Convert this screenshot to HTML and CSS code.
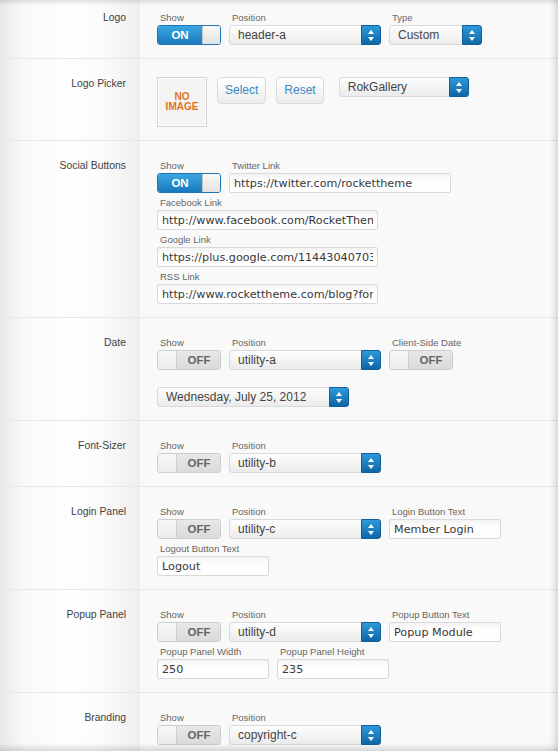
FILE: index.html
```html
<!DOCTYPE html>
<html lang="en">
<head>
<meta charset="utf-8">
<title>Gantry settings</title>
<link rel="stylesheet" href="styles.css">
</head>
<body>
<div class="panel">

  <div class="row first">
    <div class="label">Logo</div>
    <div class="fields">
      <div class="line">
        <div class="field"><div class="cap">Show</div>
          <div class="toggle on"><span class="tx">ON</span><span class="knob"></span></div></div>
        <div class="field"><div class="cap">Position</div>
          <div class="select w-pos"><span class="val">header-a</span><span class="arrow"><svg width="6" height="11" viewBox="0 0 6 11"><path d="M3 0 L6 4 H0Z M0 7 H6 L3 11Z" fill="#fff"/></svg></span></div></div>
        <div class="field"><div class="cap">Type</div>
          <div class="select w-type"><span class="val">Custom</span><span class="arrow"><svg width="6" height="11" viewBox="0 0 6 11"><path d="M3 0 L6 4 H0Z M0 7 H6 L3 11Z" fill="#fff"/></svg></span></div></div>
      </div>
    </div>
  </div>

  <div class="row">
    <div class="label">Logo Picker</div>
    <div class="fields">
      <div class="line picker">
        <div class="noimage"><span>NO</span><span>IMAGE</span></div>
        <div class="btn">Select</div>
        <div class="btn">Reset</div>
        <div class="select w-gal"><span class="val">RokGallery</span><span class="arrow"><svg width="6" height="11" viewBox="0 0 6 11"><path d="M3 0 L6 4 H0Z M0 7 H6 L3 11Z" fill="#fff"/></svg></span></div>
      </div>
    </div>
  </div>

  <div class="row">
    <div class="label">Social Buttons</div>
    <div class="fields">
      <div class="line">
        <div class="field"><div class="cap">Show</div>
          <div class="toggle on"><span class="tx">ON</span><span class="knob"></span></div></div>
        <div class="field"><div class="cap">Twitter Link</div>
          <input class="input w-tw" type="text" value="https://twitter.com/rockettheme" readonly></div>
      </div>
      <div class="line">
        <div class="field"><div class="cap">Facebook Link</div>
          <input class="input w-long" type="text" value="http://www.facebook.com/RocketTheme" readonly></div>
      </div>
      <div class="line">
        <div class="field"><div class="cap">Google Link</div>
          <input class="input w-long" type="text" value="https://plus.google.com/114430407034567" readonly></div>
      </div>
      <div class="line">
        <div class="field"><div class="cap">RSS Link</div>
          <input class="input w-long" type="text" value="http://www.rockettheme.com/blog?format=feed" readonly></div>
      </div>
    </div>
  </div>

  <div class="row">
    <div class="label">Date</div>
    <div class="fields">
      <div class="line">
        <div class="field"><div class="cap">Show</div>
          <div class="toggle off"><span class="knob"></span><span class="tx">OFF</span></div></div>
        <div class="field"><div class="cap">Position</div>
          <div class="select w-pos"><span class="val">utility-a</span><span class="arrow"><svg width="6" height="11" viewBox="0 0 6 11"><path d="M3 0 L6 4 H0Z M0 7 H6 L3 11Z" fill="#fff"/></svg></span></div></div>
        <div class="field"><div class="cap">Client-Side Date</div>
          <div class="toggle off"><span class="knob"></span><span class="tx">OFF</span></div></div>
      </div>
      <div class="line spaced">
        <div class="select w-date"><span class="val">Wednesday, July 25, 2012</span><span class="arrow"><svg width="6" height="11" viewBox="0 0 6 11"><path d="M3 0 L6 4 H0Z M0 7 H6 L3 11Z" fill="#fff"/></svg></span></div>
      </div>
    </div>
  </div>

  <div class="row">
    <div class="label">Font-Sizer</div>
    <div class="fields">
      <div class="line">
        <div class="field"><div class="cap">Show</div>
          <div class="toggle off"><span class="knob"></span><span class="tx">OFF</span></div></div>
        <div class="field"><div class="cap">Position</div>
          <div class="select w-pos"><span class="val">utility-b</span><span class="arrow"><svg width="6" height="11" viewBox="0 0 6 11"><path d="M3 0 L6 4 H0Z M0 7 H6 L3 11Z" fill="#fff"/></svg></span></div></div>
      </div>
    </div>
  </div>

  <div class="row">
    <div class="label">Login Panel</div>
    <div class="fields">
      <div class="line">
        <div class="field"><div class="cap">Show</div>
          <div class="toggle off"><span class="knob"></span><span class="tx">OFF</span></div></div>
        <div class="field"><div class="cap">Position</div>
          <div class="select w-pos"><span class="val">utility-c</span><span class="arrow"><svg width="6" height="11" viewBox="0 0 6 11"><path d="M3 0 L6 4 H0Z M0 7 H6 L3 11Z" fill="#fff"/></svg></span></div></div>
        <div class="field"><div class="cap">Login Button Text</div>
          <input class="input w-short" type="text" value="Member Login" readonly></div>
      </div>
      <div class="line">
        <div class="field"><div class="cap">Logout Button Text</div>
          <input class="input w-short" type="text" value="Logout" readonly></div>
      </div>
    </div>
  </div>

  <div class="row">
    <div class="label">Popup Panel</div>
    <div class="fields">
      <div class="line">
        <div class="field"><div class="cap">Show</div>
          <div class="toggle off"><span class="knob"></span><span class="tx">OFF</span></div></div>
        <div class="field"><div class="cap">Position</div>
          <div class="select w-pos"><span class="val">utility-d</span><span class="arrow"><svg width="6" height="11" viewBox="0 0 6 11"><path d="M3 0 L6 4 H0Z M0 7 H6 L3 11Z" fill="#fff"/></svg></span></div></div>
        <div class="field"><div class="cap">Popup Button Text</div>
          <input class="input w-short" type="text" value="Popup Module" readonly></div>
      </div>
      <div class="line">
        <div class="field"><div class="cap">Popup Panel Width</div>
          <input class="input w-short" type="text" value="250" readonly></div>
        <div class="field"><div class="cap">Popup Panel Height</div>
          <input class="input w-short" type="text" value="235" readonly></div>
      </div>
    </div>
  </div>

  <div class="row">
    <div class="label">Branding</div>
    <div class="fields">
      <div class="line">
        <div class="field"><div class="cap">Show</div>
          <div class="toggle off"><span class="knob"></span><span class="tx">OFF</span></div></div>
        <div class="field"><div class="cap">Position</div>
          <div class="select w-pos"><span class="val">copyright-c</span><span class="arrow"><svg width="6" height="11" viewBox="0 0 6 11"><path d="M3 0 L6 4 H0Z M0 7 H6 L3 11Z" fill="#fff"/></svg></span></div></div>
      </div>
    </div>
  </div>

</div>
</body>
</html>
```
FILE: styles.css
```css
* { box-sizing: border-box; }
html, body { margin: 0; padding: 0; }
body {
  font-family: "Liberation Sans", Arial, sans-serif;
  background: #f9f9f9;
  overflow: hidden;
}
.panel {
  position: relative;
  height: 751px;
  overflow: hidden;
}
.panel::after {
  content: "";
  position: absolute;
  inset: 0;
  pointer-events: none;
  box-shadow:
    inset 0 6px 5px -4px rgba(0,0,0,.13),
    inset -7px 0 5px -3px rgba(0,0,0,.12),
    inset 0 -8px 5px -4px rgba(0,0,0,.13);
}
.row {
  display: grid;
  grid-template-columns: 140px 1fr;
  border-bottom: 1px solid #e7e7e7;
  background: linear-gradient(to right, #e9e9e9 0, #f9f9f9 25px, #fefefe 70px, #fbfbfb 100px, #efefef 140px, #f9f9f9 140px);
}
.label {
  padding: 18px 14px 0 0;
  text-align: right;
  font-size: 10.4px;
  line-height: 13px;
  color: #3f3f3f;
}
.fields {
  padding: 18px 0 13px 17px;
  display: flex;
  flex-direction: column;
  gap: 3px;
}
.row.first .label,
.row.first .fields { padding-top: 11px; }
.line {
  display: flex;
  gap: 8px;
  align-items: flex-end;
}
.line.spaced { margin-top: 14px; }
.field { display: flex; flex-direction: column; }
.cap {
  font-size: 9.5px;
  line-height: 13px;
  margin: 0 0 1px 3px;
  color: #666;
  white-space: nowrap;
}

/* toggles */
.toggle {
  width: 64px;
  height: 20px;
  border-radius: 3px;
  display: flex;
  overflow: hidden;
  border: 1px solid #cdcdcd;
}
.toggle .tx {
  font-weight: bold;
  font-size: 11.5px;
  line-height: 18px;
  text-align: center;
}
.toggle.on { border-color: #1d77b6; }
.toggle.on .tx {
  flex: 0 0 44px;
  background: linear-gradient(#3aa6e1, #1a78bd);
  color: #fff;
}
.toggle.on .knob {
  flex: 1;
  background: linear-gradient(#f8f8f8, #e3e3e3);
  border-left: 1px solid #c4c4c4;
}
.toggle.off .knob {
  flex: 0 0 19px;
  background: linear-gradient(#f7f7f7, #ececec);
  border-right: 1px solid #cfcfcf;
}
.toggle.off .tx {
  flex: 1;
  background: linear-gradient(#e8e8e8, #dadada);
  color: #666;
  padding-left: 1px;
}

/* selects */
.select {
  height: 20px;
  display: flex;
  border: 1px solid #d9d9d9;
  border-radius: 3px;
  background: linear-gradient(#fefefe, #ebebeb);
}
.select .val {
  flex: 1;
  padding-left: 8px;
  font-size: 12px;
  line-height: 18px;
  color: #444;
  white-space: nowrap;
  overflow: hidden;
}
.select .arrow {
  flex: 0 0 20px;
  margin: -1px -1px -1px 0;
  border-radius: 0 3px 3px 0;
  background: linear-gradient(#2e9ad9, #0f66a6);
  border: 1px solid #0f5f9c;
  display: flex;
  align-items: center;
  justify-content: center;
}
.select .arrow svg { display: block; }
.w-pos { width: 152px; }
.w-type { width: 93px; }
.w-gal { width: 130px; }
.w-date { width: 192px; }

/* inputs */
.input {
  display: block;
  height: 20px;
  margin: 0;
  padding: 0 4px;
  border: 1px solid #d9d9d9;
  border-radius: 2px;
  background: linear-gradient(#f3f3f3, #fdfdfd 6px, #fff);
  font-family: "DejaVu Sans", Verdana, sans-serif;
  font-size: 11.2px;
  color: #383838;
  outline: none;
}
.w-tw { width: 222px; }
.w-long { width: 221px; }
.w-short { width: 112px; }

/* logo picker */
.line.picker { align-items: flex-start; gap: 10px; }
.noimage {
  width: 50px;
  height: 50px;
  border: 1px solid #d2d2d2;
  box-shadow: inset 0 0 0 1px #fff;
  background: #f3f3f3;
  display: flex;
  flex-direction: column;
  align-items: center;
  justify-content: center;
  color: #e2721a;
  font-weight: bold;
  font-size: 10px;
  line-height: 10px;
}
.btn {
  height: 27px;
  padding: 0 7px;
  border: 1px solid #dadada;
  border-radius: 4px;
  background: linear-gradient(#ffffff, #ececec);
  color: #3b88c5;
  font-size: 12px;
  line-height: 25px;
}
.line.picker .select { margin-left: 5px; }
```
